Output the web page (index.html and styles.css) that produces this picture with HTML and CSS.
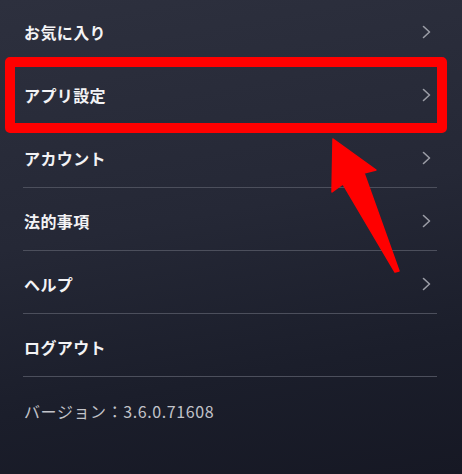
FILE: index.html
```html
<!DOCTYPE html>
<html lang="ja">
<head>
<meta charset="utf-8">
<link rel="stylesheet" href="styles.css">
</head>
<body>
<div class="screen">
  <ul class="menu">
    <li class="row"><span class="label">お気に入り</span><svg class="chev" viewBox="0 0 9 14" width="9" height="14"><polyline points="1.5,1.5 7.5,7 1.5,12.5"/></svg></li>
    <li class="row"><span class="label">アプリ設定</span><svg class="chev" viewBox="0 0 9 14" width="9" height="14"><polyline points="1.5,1.5 7.5,7 1.5,12.5"/></svg></li>
    <li class="row"><span class="label">アカウント</span><svg class="chev" viewBox="0 0 9 14" width="9" height="14"><polyline points="1.5,1.5 7.5,7 1.5,12.5"/></svg></li>
    <li class="row"><span class="label">法的事項</span><svg class="chev" viewBox="0 0 9 14" width="9" height="14"><polyline points="1.5,1.5 7.5,7 1.5,12.5"/></svg></li>
    <li class="row"><span class="label">ヘルプ</span><svg class="chev" viewBox="0 0 9 14" width="9" height="14"><polyline points="1.5,1.5 7.5,7 1.5,12.5"/></svg></li>
    <li class="row"><span class="label">ログアウト</span></li>
    <li class="row version"><span class="ver">バージョン：3.6.0.71608</span></li>
  </ul>
  <div class="highlight"></div>
  <svg class="arrow" viewBox="0 0 462 474" width="462" height="474">
    <polygon points="333,139 332,192 343,184 395,272 399,271 364,173 376,170"/>
  </svg>
</div>
</body>
</html>
```
FILE: styles.css
```css
html, body {
  margin: 0;
  padding: 0;
}
body {
  width: 462px;
  height: 474px;
  overflow: hidden;
  font-family: "Noto Sans CJK JP", "Noto Sans", sans-serif;
}
.screen {
  position: relative;
  width: 462px;
  height: 474px;
  background: linear-gradient(170deg, #2d303e 0%, #252836 45%, #1b1e2b 75%, #161824 100%);
}
.menu {
  list-style: none;
  margin: 0;
  padding: 0 25px 0 23px;
}
.row {
  display: flex;
  justify-content: space-between;
  align-items: center;
  height: 63px;
  padding-top: 4px;
  box-sizing: border-box;
  border-bottom: 1px solid #4c4f5c;
}
.row:first-child {
  height: 62px;
  padding-top: 3px;
}
.row.version {
  border-bottom: none;
}
.label {
  color: #f3f3f5;
  font-size: 16px;
  font-weight: 700;
  line-height: 20px;
  letter-spacing: 0.4px;
  padding-left: 1px;
}
.ver {
  color: #c2c3c9;
  font-size: 16px;
  font-weight: 400;
  line-height: 20px;
  letter-spacing: 0.6px;
  padding-left: 1px;
}
.chev {
  margin-right: 6px;
}
.chev polyline {
  fill: none;
  stroke: #9b9da6;
  stroke-width: 1.6;
  stroke-linecap: round;
  stroke-linejoin: round;
}
.highlight {
  position: absolute;
  left: 5px;
  top: 57px;
  width: 442px;
  height: 76px;
  box-sizing: border-box;
  border: 10px solid #ff0000;
  border-radius: 5px;
}
.arrow {
  position: absolute;
  left: 0;
  top: 0;
}
.arrow polygon {
  fill: #ff0000;
  stroke: #ff0000;
  stroke-width: 1.5;
  stroke-linejoin: round;
}
```
